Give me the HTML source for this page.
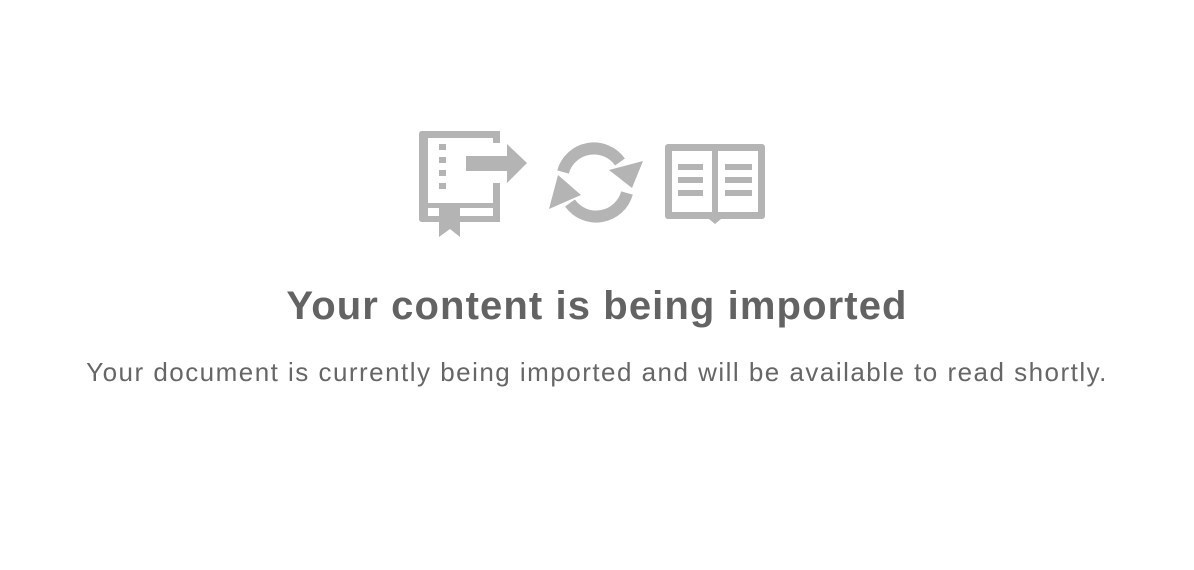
<!DOCTYPE html>
<html><head><meta charset="utf-8"><style>
html,body{margin:0;padding:0;background:#fff;width:1194px;height:570px;overflow:hidden;font-family:"Liberation Sans",sans-serif}
svg{position:absolute;left:0;top:0}
h1{position:absolute;left:0;width:1194px;top:284px;margin:0;text-align:center;font-size:40px;font-weight:bold;color:#636363;letter-spacing:1.1px}
p{position:absolute;left:0;width:1194px;top:357px;margin:0;text-align:center;font-size:26px;color:#666;letter-spacing:1.48px}
</style></head><body>
<svg width="1194" height="570" viewBox="0 0 1194 570">
<g fill="#b4b4b4">
<rect x="419" y="131" width="9" height="91" rx="3"/>
<rect x="419" y="131" width="81" height="7" rx="3"/>
<rect x="493" y="131" width="7" height="12"/>
<rect x="493" y="183" width="7" height="39"/>
<rect x="419" y="203" width="81" height="5"/>
<rect x="419" y="216" width="81" height="6" rx="3"/>
<rect x="439" y="144" width="7" height="6"/>
<rect x="439" y="157" width="7" height="6"/>
<rect x="439" y="170" width="7" height="6"/>
<rect x="439" y="183" width="7" height="6"/>
<rect x="466" y="156" width="42" height="15"/>
<polygon points="507,144 527,163 507,183"/>
<polygon points="439,208 460,208 460,237 450,229 439,237"/>
<path fill-rule="evenodd" d="M668,144 H762 a3,3 0 0 1 3,3 V216 a3,3 0 0 1 -3,3 H721 L715,224 L709,219 H668 a3,3 0 0 1 -3,-3 V147 a3,3 0 0 1 3,-3 Z M672,151 V212 H712 V151 Z M718,151 V212 H758 V151 Z"/>
<rect x="678" y="164" width="25" height="6"/>
<rect x="678" y="177" width="25" height="6"/>
<rect x="678" y="190" width="25" height="6"/>
<rect x="725" y="164" width="27" height="6"/>
<rect x="725" y="177" width="27" height="6"/>
<rect x="725" y="190" width="27" height="6"/>
</g>
<g fill="none" stroke="#b4b4b4" stroke-width="12">
<path d="M563,172 A32,32 0 0 1 620,162"/>
<path d="M627,193 A32,32 0 0 1 570,203"/>
</g>
<g fill="#b4b4b4">
<polygon points="609,170 643,161 632,188"/>
<polygon points="581,195 549,209 558,175"/>
</g>
</svg>
<h1>Your content is being imported</h1>
<p>Your document is currently being imported and will be available to read shortly.</p>
</body></html>
